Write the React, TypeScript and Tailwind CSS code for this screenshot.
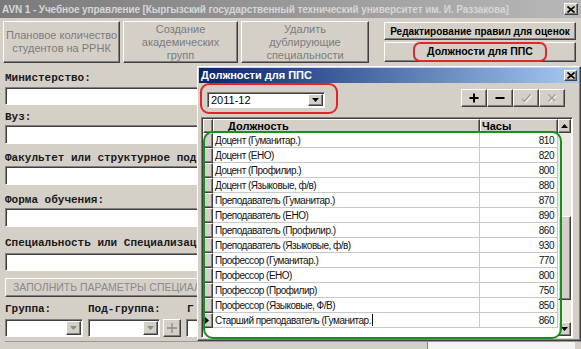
import React from "react";

const raised =
  "border border-t-white border-l-white border-r-[#404040] border-b-[#404040] shadow-[inset_-1px_-1px_#808080]";
const sunken =
  "border border-t-[#808080] border-l-[#808080] border-r-white border-b-white shadow-[inset_1px_1px_#404040]";

const rows: [string, string][] = [
  ["Доцент (Гуманитар.)", "810"],
  ["Доцент (ЕНО)", "820"],
  ["Доцент (Профилир.)", "800"],
  ["Доцент (Языковые, ф/в)", "880"],
  ["Преподаватель (Гуманитар.)", "870"],
  ["Преподаватель (ЕНО)", "890"],
  ["Преподаватель (Профилир.)", "860"],
  ["Преподаватель (Языковые, ф/в)", "930"],
  ["Профессор (Гуманитар.)", "770"],
  ["Профессор (ЕНО)", "800"],
  ["Профессор (Профилир)", "750"],
  ["Профессор (Языковые, Ф/В)", "850"],
  ["Старший преподаватель (Гуманитар.", "860"],
];

function Tri({ up = false, color = "#000" }: { up?: boolean; color?: string }) {
  return (
    <svg width="7" height="4" viewBox="0 0 7 4">
      <path d={up ? "M0 4 L3.5 0 L7 4 Z" : "M0 0 L7 0 L3.5 4 Z"} fill={color} />
    </svg>
  );
}

function CloseX() {
  return (
    <svg width="8" height="7" viewBox="0 0 8 7">
      <path d="M0.5 0.5 L7.5 6.5 M7.5 0.5 L0.5 6.5" stroke="#000" strokeWidth="1.6" />
    </svg>
  );
}

function Combo({ w, dim = false, value = "" }: { w: string; dim?: boolean; value?: string }) {
  return (
    <div className={`${sunken} ${w} h-full bg-white flex items-stretch`}>
      <div className="flex-1 pl-[3px] flex items-center text-[11px] text-black leading-none">{value}</div>
      <div className={`${raised} w-[15px] bg-[#d4d0c8] flex items-center justify-center m-[1px]`}>
        <Tri color={dim ? "#8a8a8a" : "#000"} />
      </div>
    </div>
  );
}

function Label({ children, cls }: { children: React.ReactNode; cls: string }) {
  return (
    <div
      className={`${cls} h-[14px] flex items-center whitespace-nowrap font-['Liberation_Mono'] font-bold text-[11px] text-[#1a1a1a]`}
    >
      {children}
    </div>
  );
}

function Field({ cls }: { cls: string }) {
  return <div className={`${sunken} ${cls} w-[560px] bg-white`} />;
}

export default function App() {
  return (
    <div className="w-[581px] h-[349px] relative overflow-hidden bg-[#d4d0c8] font-['Liberation_Sans'] select-none">
      {/* main window title */}
      <div className="h-[18px] flex items-center justify-between pl-[2px] pr-[3px] bg-linear-to-r from-[#7a7a7a] to-[#b8b8b8]">
        <span className="text-[10px] font-bold text-[#d6d6d6] whitespace-nowrap tracking-[-0.1px]">
          AVN 1 - Учебное управление [Кыргызский государственный технический университет им. И. Раззакова]
        </span>
        <div className={`${raised} w-[14px] h-[12px] bg-[#d4d0c8] flex items-center justify-center`}>
          <CloseX />
        </div>
      </div>

      {/* top buttons */}
      <div className="mt-[3px] flex items-start pl-[3px] h-[42px]">
        <div className={`${raised} w-[117px] h-[42px] flex items-center justify-center text-center text-[11px] leading-[13px] text-[#7c7c7c]`}>
          Плановое количество
          <br />
          студентов на РРНК
        </div>
        <div className={`${raised} ml-[3px] w-[115px] h-[42px] flex items-center justify-center text-center text-[11px] leading-[13px] text-[#7c7c7c]`}>
          Создание
          <br />
          академических
          <br />
          групп
        </div>
        <div className={`${raised} ml-[3px] w-[128px] h-[42px] flex items-center justify-center text-center text-[11px] leading-[13px] text-[#7c7c7c]`}>
          Удалить
          <br />
          дублирующие
          <br />
          специальности
        </div>
        <div className="ml-[15px] w-[192px] flex flex-col">
          <div className={`${raised} mt-[1px] h-[18px] flex items-center justify-center text-[10px] font-bold text-black whitespace-nowrap`}>
            Редактирование правил для оценок
          </div>
          <div className={`${raised} mt-[2px] h-[20px] flex items-center justify-center`}>
            <span className="border-2 border-[#e0282c] rounded-[7px] px-[12px] h-[20px] flex items-center text-[10.5px] font-bold text-black whitespace-nowrap">
              Должности для ППС
            </span>
          </div>
        </div>
      </div>

      {/* form (right part hidden under the dialog) */}
      <div className="pl-[5px] flex flex-col">
        <Label cls="mt-[8px]">Министерство:</Label>
        <Field cls="mt-[2px] h-[18px]" />
        <Label cls="mt-[5px]">Вуз:</Label>
        <Field cls="mt-[1px] h-[19px]" />
        <Label cls="mt-[7px]">Факультет или структурное под</Label>
        <Field cls="mt-[1px] h-[19px]" />
        <Label cls="mt-[8px]">Форма обучения:</Label>
        <Field cls="mt-[1px] h-[19px]" />
        <Label cls="mt-[9px]">Специальность или Специализац</Label>
        <Field cls="mt-[3px] h-[18px]" />
        <div className={`${raised} mt-[7px] w-[300px] h-[19px] flex items-center pl-[7px] text-[10.5px] text-[#8a8a8a] whitespace-nowrap`}>
          ЗАПОЛНИТЬ ПАРАМЕТРЫ СПЕЦИАЛ
        </div>
        <div className="mt-[5px] h-[14px] flex">
          <Label cls="w-[83px]">Группа:</Label>
          <Label cls="w-[99px]">Под-группа:</Label>
          <Label cls="">Г</Label>
        </div>
        <div className="mt-[3px] h-[18px] flex items-start">
          <Combo w="w-[78px]" dim />
          <div className="ml-[5px] h-full">
            <Combo w="w-[72px]" dim />
          </div>
          <div className={`${raised} ml-[3px] w-[18px] h-[18px] bg-[#d4d0c8] flex items-center justify-center`}>
            <svg width="12" height="12" viewBox="0 0 12 12">
              <path d="M6 1 V11 M1 6 H11" stroke="#8a8a8a" strokeWidth="1.3" />
            </svg>
          </div>
          <div className={`${sunken} ml-[5px] w-[80px] h-full bg-white`} />
        </div>
        <div className="mt-[4px] h-[8px] flex border-t border-[#9a9a9a]">
          <div className="w-[422px]" />
          <div className="w-[148px] bg-[#f4f4f4] border-l border-[#808080]" />
        </div>
      </div>

      {/* dialog window */}
      <div className={`${raised} absolute left-[197px] top-[66px] w-[384px] h-[275px] bg-[#d4d0c8] p-[1px] flex flex-col`}>
        <div className="h-[15px] flex items-center justify-between pl-[2px] pr-[2px] bg-linear-to-r from-[#0a246a] to-[#a6caf0]">
          <span className="text-[11px] font-bold text-white whitespace-nowrap">Должности для ППС</span>
          <div className={`${raised} w-[13px] h-[11px] bg-[#d4d0c8] flex items-center justify-center`}>
            <CloseX />
          </div>
        </div>

        <div className="h-[34px] flex items-start">
          <div className="ml-[1px] w-[138px] h-[31px] border-2 border-[#e0262a] rounded-[9px] pl-[5px] pt-[7px]">
            <div className="h-[16px]">
              <Combo w="w-[118px]" value="2011-12" />
            </div>
          </div>
          <div className="ml-auto mr-[14px] mt-[6px] flex">
            <div className={`${raised} w-[26px] h-[18px] flex items-center justify-center`}>
              <svg width="10" height="10" viewBox="0 0 10 10">
                <path d="M5 0.5 V9.5 M0.5 5 H9.5" stroke="#000" strokeWidth="2" />
              </svg>
            </div>
            <div className={`${raised} w-[26px] h-[18px] flex items-center justify-center`}>
              <svg width="10" height="10" viewBox="0 0 10 10">
                <path d="M0.5 5 H9.5" stroke="#000" strokeWidth="2" />
              </svg>
            </div>
            <div className={`${raised} w-[26px] h-[18px] flex items-center justify-center`}>
              <svg width="12" height="10" viewBox="0 0 12 10">
                <path d="M2 6 L4.5 8.5 L10.5 1.5" stroke="#ffffff" strokeWidth="1.5" fill="none" transform="translate(0.8 0.8)" />
                <path d="M2 6 L4.5 8.5 L10.5 1.5" stroke="#9a9a9a" strokeWidth="1.5" fill="none" />
              </svg>
            </div>
            <div className={`${raised} w-[26px] h-[18px] flex items-center justify-center`}>
              <svg width="10" height="10" viewBox="0 0 10 10">
                <path d="M1.5 1.5 L8.5 8.5 M8.5 1.5 L1.5 8.5" stroke="#ffffff" strokeWidth="1.4" transform="translate(0.8 0.8)" />
                <path d="M1.5 1.5 L8.5 8.5 M8.5 1.5 L1.5 8.5" stroke="#9a9a9a" strokeWidth="1.4" />
              </svg>
            </div>
          </div>
        </div>

        {/* grid */}
        <div className={`${sunken} ml-[2px] w-[372px] h-[221px] bg-white flex`}>
          <div className="w-[356px] flex flex-col ml-[1px] mt-[1px]">
            <div className="h-[14px] flex bg-[#d4d0c8]">
              <div className={`${raised} w-[10px]`} />
              <div className={`${raised} w-[267px] pl-[14px] flex items-center text-[11px] font-bold text-black`}>
                Должность
              </div>
              <div className={`${raised} w-[78px] pl-[1px] flex items-center text-[11px] font-bold text-black`}>
                Часы
              </div>
            </div>
            {rows.map(([name, hours], i) => (
              <div key={i} className="h-[15px] flex">
                <div className={`${raised} w-[10px] bg-[#d4d0c8] flex items-center justify-start pl-[1px]`}>
                  {i === rows.length - 1 && (
                    <svg width="4" height="7" viewBox="0 0 4 7">
                      <path d="M0 0 L4 3.5 L0 7 Z" fill="#000" />
                    </svg>
                  )}
                </div>
                <div className="w-[267px] border-r border-b border-[#c8c8c8] pl-[2px] flex items-center text-[10px] tracking-[-0.5px] text-[#111] whitespace-nowrap">
                  {name}
                  {i === rows.length - 1 && <span className="ml-[1px] w-[1px] h-[12px] bg-black" />}
                </div>
                <div className="w-[78px] border-r border-b border-[#c8c8c8] pr-[3px] flex items-center justify-end text-[10px] tracking-[-0.5px] text-[#111]">
                  {hours}
                </div>
              </div>
            ))}
          </div>
          {/* scrollbar */}
          <div className="ml-auto w-[13px] mt-[1px] mb-[1px] mr-[1px] flex flex-col bg-[#ebe9e4]">
            <div className={`${raised} h-[14px] bg-[#d4d0c8] flex items-center justify-center`}>
              <Tri up />
            </div>
            <div className="h-[83px]" />
            <div className={`${raised} h-[84px] bg-[#d4d0c8]`} />
            <div className="flex-1" />
            <div className={`${raised} h-[14px] bg-[#d4d0c8] flex items-center justify-center`}>
              <Tri />
            </div>
          </div>
        </div>

        {/* green annotation outline */}
        <div className="absolute left-[5px] top-[64px] w-[359px] h-[208px] border-[2.5px] border-[#16901e] rounded-[10px] pointer-events-none" />
      </div>
    </div>
  );
}
